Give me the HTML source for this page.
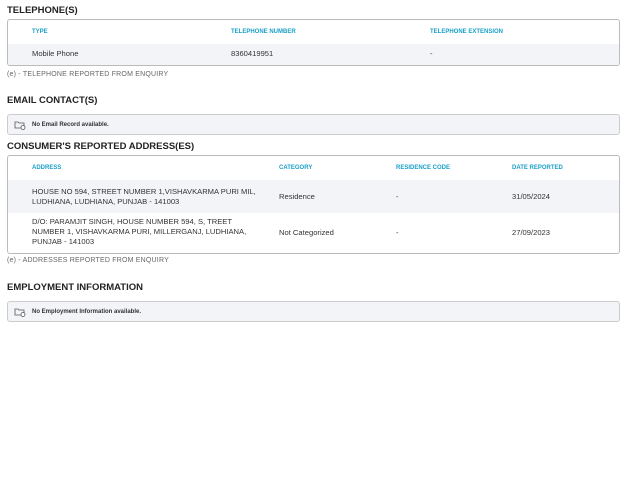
<!DOCTYPE html>
<html><head><style>
body{margin:0;background:#fff;font-family:"Liberation Sans",sans-serif;color:#333;width:627px;height:501px;position:relative;overflow:hidden}
.a{position:absolute}
h2{position:absolute;margin:0;font-size:9.5px;font-weight:bold;color:#222;letter-spacing:0;left:7px}
.box{position:absolute;left:7px;width:611px;border:1px solid #bbb;border-radius:3px;overflow:hidden}
.hd{font-size:6px;font-weight:bold;color:#1aa0c8;position:absolute}
.tx{font-size:7.6px;color:#333;position:absolute;line-height:10px}
.note{position:absolute;left:7px;font-size:7px;color:#666;letter-spacing:0.2px}
.empty{position:absolute;left:7px;width:611px;border:1px solid #ccc;border-radius:3px;background:#f3f4f8;height:19px}
.empty span{position:absolute;left:24px;top:6px;font-size:6px;font-weight:bold;color:#333}
</style></head><body>
<h2 style="top:5px">TELEPHONE(S)</h2>
<div class="box" style="top:19px;height:45px">
 <div class="a" style="left:0;top:24px;width:100%;height:21px;background:#f3f4f8"></div>
 <div class="hd" style="left:24px;top:9px">TYPE</div>
 <div class="hd" style="left:223px;top:9px">TELEPHONE NUMBER</div>
 <div class="hd" style="left:422px;top:9px">TELEPHONE EXTENSION</div>
 <div class="tx" style="left:24px;top:29px">Mobile Phone</div>
 <div class="tx" style="left:223px;top:29px">8360419951</div>
 <div class="tx" style="left:422px;top:29px">-</div>
</div>
<div class="note" style="top:71px">(e) - TELEPHONE REPORTED FROM ENQUIRY</div>
<h2 style="top:95px">EMAIL CONTACT(S)</h2>
<div class="empty" style="top:114px"><svg class="a" style="left:6px;top:5px" width="12" height="10" viewBox="0 0 12 10"><path d="M1 2h3l1 1h5v5H1z" fill="none" stroke="#555" stroke-width="0.8"/><circle cx="9" cy="7.5" r="2" fill="#fff" stroke="#555" stroke-width="0.8"/></svg><span style="top:7px">No Email Record available.</span></div>
<h2 style="top:141px">CONSUMER'S REPORTED ADDRESS(ES)</h2>
<div class="box" style="top:155px;height:97px">
 <div class="a" style="left:0;top:24px;width:100%;height:33px;background:#f3f4f8"></div>
 <div class="hd" style="left:24px;top:9px">ADDRESS</div>
 <div class="hd" style="left:271px;top:9px">CATEGORY</div>
 <div class="hd" style="left:388px;top:9px">RESIDENCE CODE</div>
 <div class="hd" style="left:504px;top:9px">DATE REPORTED</div>
 <div class="tx" style="left:24px;top:31px;width:238px">HOUSE NO 594, STREET NUMBER 1,VISHAVKARMA PURI MIL, LUDHIANA, LUDHIANA, PUNJAB - 141003</div>
 <div class="tx" style="left:271px;top:36px">Residence</div>
 <div class="tx" style="left:388px;top:36px">-</div>
 <div class="tx" style="left:504px;top:36px">31/05/2024</div>
 <div class="tx" style="left:24px;top:61px;width:225px">D/O: PARAMJIT SINGH, HOUSE NUMBER 594, S, TREET NUMBER 1, VISHAVKARMA PURI, MILLERGANJ, LUDHIANA, PUNJAB - 141003</div>
 <div class="tx" style="left:271px;top:72px">Not Categorized</div>
 <div class="tx" style="left:388px;top:72px">-</div>
 <div class="tx" style="left:504px;top:72px">27/09/2023</div>
</div>
<div class="note" style="top:257px">(e) - ADDRESSES REPORTED FROM ENQUIRY</div>
<h2 style="top:282px">EMPLOYMENT INFORMATION</h2>
<div class="empty" style="top:301px"><svg class="a" style="left:6px;top:5px" width="12" height="10" viewBox="0 0 12 10"><path d="M1 2h3l1 1h5v5H1z" fill="none" stroke="#555" stroke-width="0.8"/><circle cx="9" cy="7.5" r="2" fill="#fff" stroke="#555" stroke-width="0.8"/></svg><span style="top:7px">No Employment Information available.</span></div>
</body></html>
